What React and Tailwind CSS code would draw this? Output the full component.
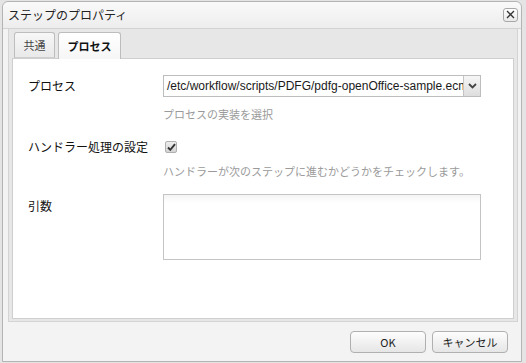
import React from "react";

const jp = { fontFamily: '"Noto Sans CJK JP", "Noto Sans", sans-serif' };
const latin = { fontFamily: '"Liberation Sans", "Noto Sans CJK JP", sans-serif' };

export default function App() {
  return (
    <div className="w-[526px] h-[363px] bg-[#e4e4e4] overflow-hidden" style={jp}>
      <div className="ml-[2px] mt-[1px] w-[520px] h-[361px] border border-[#b4b4b4] rounded-t-[6px] bg-[#f3f3f3] flex flex-col">
        {/* title bar */}
        <div className="h-[27px] shrink-0 flex items-center justify-between pl-[5px] pr-[3px] bg-gradient-to-b from-[#fafafa] to-[#ededed] border-b border-[#d2d2d2] rounded-t-[6px]">
          <span className="text-[12px] leading-none text-[#222]">ステップのプロパティ</span>
          <div className="w-[15px] h-[14px] mt-[-1px] rounded-[3px] border border-[#a8a8a8] bg-gradient-to-b from-white to-[#e9e9e9] flex items-center justify-center">
            <svg width="9" height="9" viewBox="0 0 9 9">
              <path d="M1 1 L8 8 M8 1 L1 8" stroke="#333" strokeWidth="1.3" />
            </svg>
          </div>
        </div>
        {/* tab panel outer */}
        <div className="ml-[5px] mr-[3px] h-[293px] shrink-0 border-x border-b border-[#d4d4d4] bg-[#e7e7e7] px-[3px] pb-[2px] flex flex-col">
          <div className="h-[29px] shrink-0 flex items-end gap-[3px] pl-[2px] relative z-10">
            <div className="h-[26px] w-[41px] border border-[#bdbdbd] border-b-[#cfcfcf] rounded-t-[3px] bg-gradient-to-b from-[#f7f7f7] to-[#e9e9e9] flex items-center justify-center">
              <span className="text-[11px] leading-none text-[#444]">共通</span>
            </div>
            <div className="h-[27px] w-[63px] border border-[#bdbdbd] border-b-0 rounded-t-[3px] bg-gradient-to-b from-[#ffffff] to-[#f6f6f6] flex items-center justify-center -mb-[1px]">
              <span className="text-[11px] leading-none font-bold text-[#111] mt-[1px]">プロセス</span>
            </div>
          </div>
          <div className="flex-1 border border-[#cfcfcf] bg-white pl-[15px] pt-[16px]">
            <div className="grid grid-cols-[135px_318px]">
              {/* row 1 */}
              <div className="h-[22px] flex items-center text-[12px] leading-none text-[#111]">プロセス</div>
              <div className="h-[22px] border border-[#bdbdbd] flex bg-white">
                <div className="flex-1 overflow-hidden whitespace-nowrap pl-[3px] flex items-center text-[12px] leading-none text-[#1a1a1a]" style={latin}>
                  /etc/workflow/scripts/PDFG/pdfg-openOffice-sample.ecma
                </div>
                <div className="w-[17px] border-l border-[#c4c4c4] bg-gradient-to-b from-[#f6f6f6] to-[#dedede] flex items-center justify-center">
                  <svg width="9" height="6" viewBox="0 0 9 6">
                    <path d="M1 1 L4.5 4.5 L8 1" stroke="#444" strokeWidth="1.8" fill="none" />
                  </svg>
                </div>
              </div>
              <div />
              <div className="mt-[12px] text-[11px] leading-none text-[#9a9a9a]">プロセスの実装を選択</div>
              {/* row 2 */}
              <div className="mt-[20px] h-[13px] flex items-center text-[12px] leading-none text-[#111] whitespace-nowrap">ハンドラー処理の設定</div>
              <div className="mt-[20px] h-[13px] flex items-center">
                <div className="ml-[2px] w-[12px] h-[12px] border border-[#b0b0b0] rounded-[2px] bg-gradient-to-b from-[#eeeeee] to-[#d4d4d4] flex items-center justify-center">
                  <svg width="9" height="8" viewBox="0 0 9 8">
                    <path d="M1 4.5 L3.3 6.8 L8 1.2" stroke="#333" strokeWidth="1.9" fill="none" />
                  </svg>
                </div>
              </div>
              <div />
              <div className="mt-[13px] text-[11px] leading-none text-[#9a9a9a] whitespace-nowrap">ハンドラーが次のステップに進むかどうかをチェックします。</div>
              {/* row 3 */}
              <div className="mt-[17px] pt-[6px] text-[12px] leading-none text-[#111]">引数</div>
              <div className="mt-[17px] h-[66px] border border-[#c4c4c4] bg-gradient-to-b from-[#f4f4f4] to-white to-[12%]" />
            </div>
          </div>
        </div>
        {/* footer */}
        <div className="flex-1 flex items-start justify-end gap-[6px] pr-[13px] pt-[9px]">
          <div className="w-[76px] h-[22px] border border-[#b0b0b0] rounded-[4px] bg-gradient-to-b from-[#fdfdfd] to-[#e6e6e6] flex items-center justify-center">
            <span className="text-[11px] leading-none text-[#222]">OK</span>
          </div>
          <div className="w-[76px] h-[22px] border border-[#b0b0b0] rounded-[4px] bg-gradient-to-b from-[#fdfdfd] to-[#e6e6e6] flex items-center justify-center">
            <span className="text-[11px] leading-none text-[#222]">キャンセル</span>
          </div>
        </div>
      </div>
    </div>
  );
}
